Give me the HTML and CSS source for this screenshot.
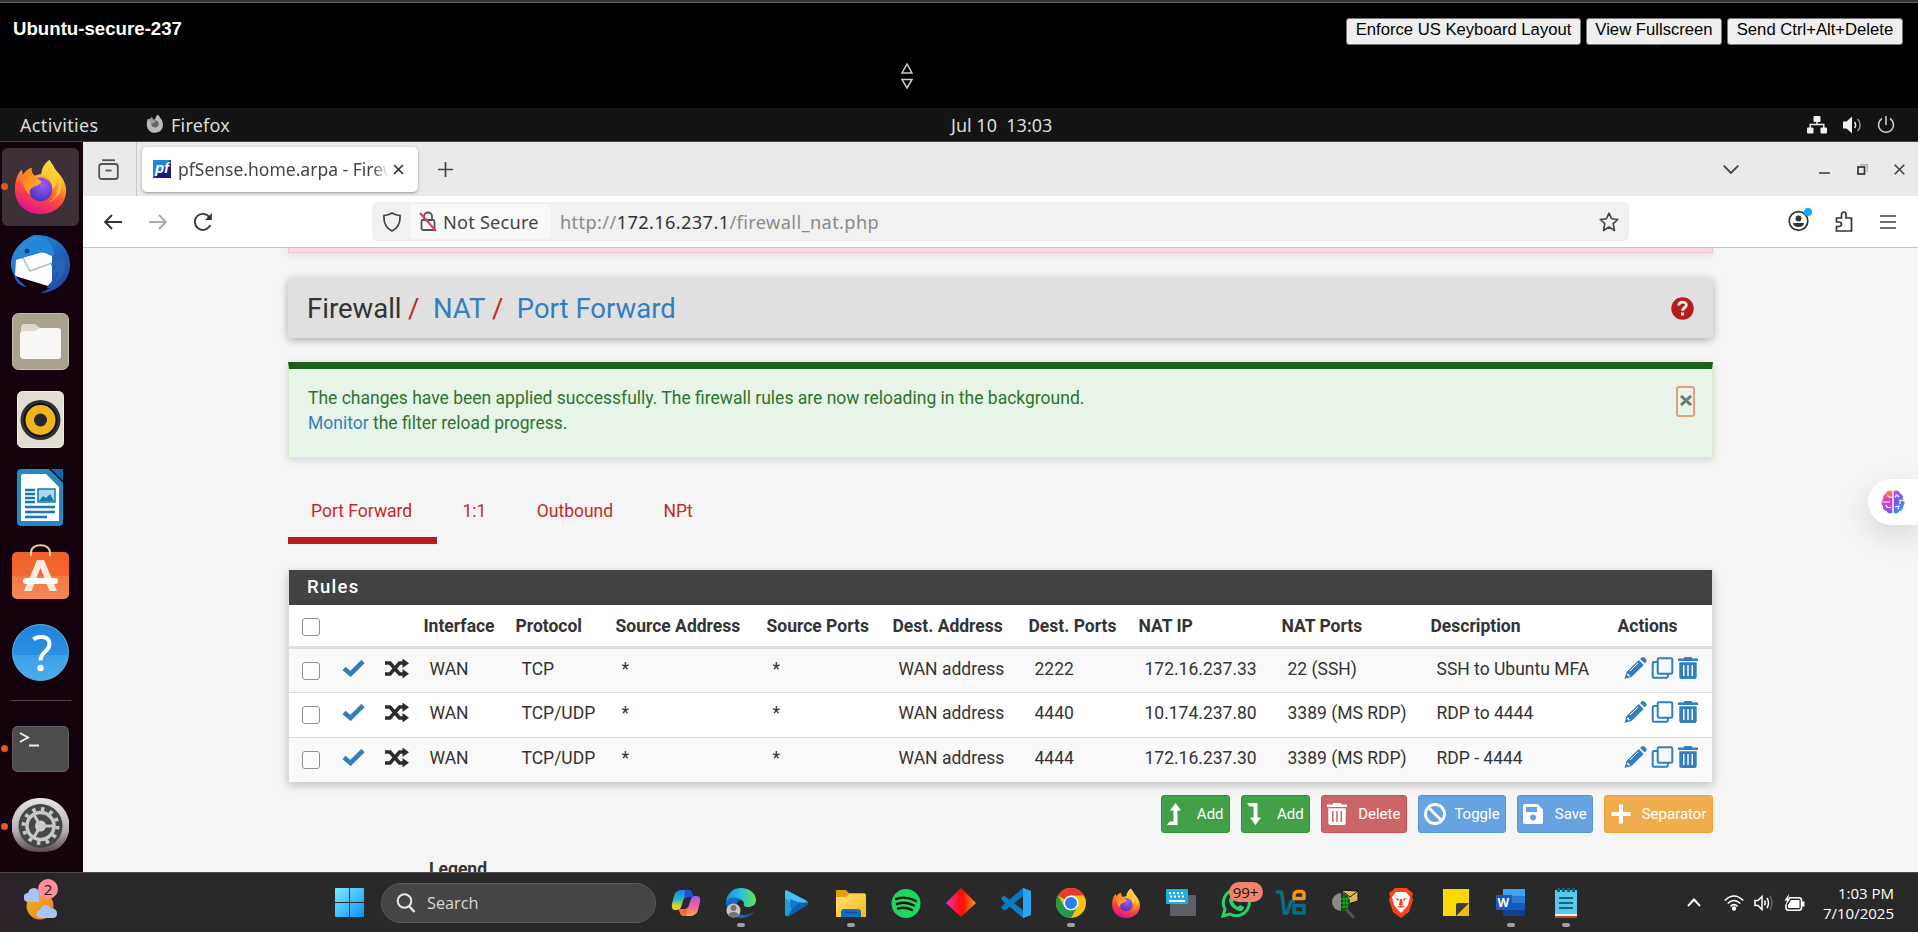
FILE: index.html
```html
<!DOCTYPE html>
<html lang="en">
<head>
<meta charset="utf-8">
<title>Ubuntu-secure-237</title>
<link rel="stylesheet" href="styles.css">
</head>
<body>
<svg class="defs" width="0" height="0" aria-hidden="true">
  <defs>
    <linearGradient id="ff-body" x1="0.8" y1="0" x2="0.4" y2="1"><stop offset="0" stop-color="#fff44f"/><stop offset=".35" stop-color="#ffb02a"/><stop offset=".65" stop-color="#ff4a3a"/><stop offset="1" stop-color="#e0148c"/></linearGradient>
    <radialGradient id="ff-globe" cx=".6" cy=".3" r=".7"><stop offset="0" stop-color="#a05bff"/><stop offset="1" stop-color="#4a35c0"/></radialGradient>
    <linearGradient id="ff-head" x1="0" y1="0" x2="1" y2="1"><stop offset="0" stop-color="#ff7a1a"/><stop offset="1" stop-color="#ffb52e"/></linearGradient>
    <linearGradient id="tb-bird" x1="0" y1="0" x2="1" y2="1"><stop offset="0" stop-color="#2b9ae8"/><stop offset=".5" stop-color="#1f6ac0"/><stop offset="1" stop-color="#2c3f9e"/></linearGradient>
    <linearGradient id="help-bg" x1="0" y1="0" x2="0" y2="1"><stop offset="0" stop-color="#2283db"/><stop offset=".54" stop-color="#2a91e2"/><stop offset=".55" stop-color="#3da0e6"/><stop offset="1" stop-color="#4aaeec"/></linearGradient>
    <linearGradient id="bag-bg" x1="0" y1="0" x2="0" y2="1"><stop offset="0" stop-color="#f4602a"/><stop offset=".5" stop-color="#f2682f"/><stop offset=".51" stop-color="#f27a45"/><stop offset="1" stop-color="#f4875a"/></linearGradient>
    <linearGradient id="gear-ring" x1="0" y1="0" x2="0" y2="1"><stop offset="0" stop-color="#e6e6e6"/><stop offset=".6" stop-color="#b5b0b3"/><stop offset="1" stop-color="#5a4a55"/></linearGradient>
    <linearGradient id="win-logo" x1="0" y1="0" x2="1" y2="1"><stop offset="0" stop-color="#7deaff"/><stop offset="1" stop-color="#0a95f5"/></linearGradient>
    <linearGradient id="brain-l" x1="0" y1="0" x2="0" y2="1"><stop offset="0" stop-color="#ff8c3a"/><stop offset=".4" stop-color="#e93bc0"/><stop offset="1" stop-color="#7a5cf5"/></linearGradient>
    <linearGradient id="brain-r" x1="0" y1="0" x2=".6" y2="1"><stop offset="0" stop-color="#d14bd8"/><stop offset=".5" stop-color="#6a5cf5"/><stop offset="1" stop-color="#2aa8f5"/></linearGradient>
    <linearGradient id="cp-l" x1="0" y1="0" x2="0" y2="1"><stop offset="0" stop-color="#1b84e8"/><stop offset=".45" stop-color="#28b4c8"/><stop offset=".8" stop-color="#d8d820"/><stop offset="1" stop-color="#f5c018"/></linearGradient>
    <linearGradient id="cp-r" x1="0" y1="0" x2="0" y2="1"><stop offset="0" stop-color="#a05cf0"/><stop offset=".5" stop-color="#f0609a"/><stop offset="1" stop-color="#ffa850"/></linearGradient>
    <linearGradient id="edge-g" x1="0" y1="0" x2="1" y2="0"><stop offset="0" stop-color="#1c8fe0"/><stop offset=".5" stop-color="#2ac0d8"/><stop offset="1" stop-color="#6be04a"/></linearGradient>
    <linearGradient id="folder-g" x1="0" y1="0" x2="1" y2="1"><stop offset="0" stop-color="#ffe07a"/><stop offset="1" stop-color="#fdb913"/></linearGradient>
    <linearGradient id="dia-g" x1="0" y1="0" x2="1" y2="0"><stop offset="0" stop-color="#f02fd0"/><stop offset=".45" stop-color="#ff1010"/><stop offset=".6" stop-color="#f81808"/><stop offset="1" stop-color="#ffa000"/></linearGradient>
    <linearGradient id="sun-g" x1="0" y1="0" x2="1" y2="1"><stop offset="0" stop-color="#f5b02a"/><stop offset="1" stop-color="#f08010"/></linearGradient>

    <symbol id="firefox" viewBox="0 0 54 56">
      <path d="M36 1C40 6 42 11 44 13C49 18 54 26 53 34C52 47 41 56 27 56C12 56 1 46 1 31C1 23 3 17 6 13L8 11L9 16C12 12 15 10 18 9C17 12 19 16 21 17L28 15C28 9 32 4 36 1Z" fill="url(#ff-body)"/>
      <circle cx="27" cy="31" r="12" fill="url(#ff-globe)"/>
      <path d="M18 9C17 13 20 17 22 18L28 23C27 27 22 27 19 29C16 31 15 33 17 37C11 33 8 26 9 17C12 12 15 10 18 9Z" fill="url(#ff-head)"/>
      <path d="M28 15C35 17 40 24 39 31C44 27 45 20 43 13C47 22 47 38 35 44C46 41 50 30 48 22L44 13C41 10 39 6 36 1C31 5 29 10 28 15Z" fill="#ffd23a" opacity=".75"/>
    </symbol>
    <symbol id="pencil" viewBox="0 0 22 22"><path d="M14.300 3 19.200 7.900 7 20 0 22 2 15Z M15.600 1.900 17 .600C18 -.2 19.200-.2 20 .600L21.500 2.200C22.300 3 22.300 4.200 21.500 5L20.300 6.500Z"/><path class="cut" d="M5.500 14 13.500 6" stroke-width="1"/><path class="cut" d="M2.700 17 5 19.300" stroke-width="1.500"/></symbol>
    <symbol id="clone" viewBox="0 0 22 22"><path d="M7.500 1.200H19.500A1.300 1.300 0 0 1 20.800 2.500V15.500A1.300 1.300 0 0 1 19.500 16.800H7.500A1.300 1.300 0 0 1 6.200 15.500V2.500A1.300 1.300 0 0 1 7.500 1.200ZM6 5H2.500A1.300 1.300 0 0 0 1.200 6.300V19.500A1.300 1.300 0 0 0 2.500 20.800H15A1.300 1.300 0 0 0 16.300 19.500V17" fill="none" stroke="currentColor" stroke-width="2"/></symbol>
    <symbol id="trash" viewBox="0 0 20 22"><path fill-rule="evenodd" d="M0 1.500H5.500L6.500 0H13.500L14.500 1.500H20V4H0ZM1.300 5.200H18.700V20A2 2 0 0 1 16.700 22H3.300A2 2 0 0 1 1.300 20ZM5 8V19H6.500V8ZM9.250 8V19H10.750V8ZM13.500 8V19H15V8Z"/></symbol>
    <symbol id="check" viewBox="0 0 22 17"><path d="M1.500 8.500 8 14 20.500 1.500" fill="none" stroke="currentColor" stroke-width="4.600"/></symbol>
    <symbol id="shuffle" viewBox="0 0 24 19"><path d="M0 4H5L14.500 15H18M0 15H5L14.500 4H18" fill="none" stroke="currentColor" stroke-width="3.600"/><path d="M17.500 -.5 24 4.200 17.500 9ZM17.500 10 24 14.800 17.500 19.500Z"/></symbol>
  </defs>
</svg>

<header class="host-bar">
  <h1 class="host-title">Ubuntu-secure-237</h1>
  <div class="host-actions">
    <button class="host-btn b1">Enforce US Keyboard Layout</button>
    <button class="host-btn b2">View Fullscreen</button>
    <button class="host-btn b3">Send Ctrl+Alt+Delete</button>
  </div>
  <svg class="drag-cursor" width="14" height="28" viewBox="0 0 14 28" fill="#000" stroke="#ccc" stroke-width="1.500"><path d="M7 2 12 11H2ZM7 26 12 17.500H2Z"/></svg>
</header>

<div class="gnome-bar">
  <span class="activities">Activities</span>
  <span class="app-menu">
    <svg width="18" height="19" viewBox="0 0 54 56"><path d="M36 1C40 6 42 11 44 13C54 22 56 56 27 56C5 56-3 33 6 13L9 16 18 9 21 17 28 15C28 9 32 4 36 1Z" fill="#bbb"/><circle cx="27" cy="29" r="11" fill="#666"/><path d="M9 17 18 9 22 18 30 23 19 29Z" fill="#999"/></svg>
    Firefox
  </span>
  <span class="clock">Jul 10&nbsp; 13:03</span>
  <span class="status">
    <svg width="20" height="18" viewBox="0 0 20 18" fill="#f0f0f0"><rect x="6.500" y="0" width="7" height="6" rx="1"/><rect x="0" y="11.500" width="6.500" height="6" rx="1"/><rect x="13.500" y="11.500" width="6.500" height="6" rx="1"/><path d="M10 5V8.500M3.200 12V8.500H16.800V12" fill="none" stroke="#f0f0f0" stroke-width="1.400"/></svg>
    <svg width="19" height="18" viewBox="0 0 19 18"><path d="M0 5.500H3.500L9 .500V17.500L3.500 12.500H0Z" fill="#f0f0f0"/><path d="M11.500 6C13 7.500 13 10.500 11.500 12" fill="none" stroke="#eee" stroke-width="1.500"/><path d="M14.500 3C18 6 18 12 14.500 15" fill="none" stroke="#999" stroke-width="1.500"/></svg>
    <svg width="18" height="18" viewBox="0 0 18 18" fill="none" stroke="#ccc" stroke-width="1.600"><path d="M5 2.500A7.500 7.500 0 1 0 13 2.500M9 0V9"/></svg>
  </span>
</div>

<div class="desktop">
  <nav class="dock">
    <div class="dock-item active running"><svg width="53" height="55"><use href="#firefox"/></svg></div>
    <div class="dock-item"><svg width="61" height="60" viewBox="0 0 61 60"><path d="M24 1C45 0 60 13 60 31C60 46 48 58 31 59L40 54C20 56 3 48 1 32C0 20 9 7 24 1Z" fill="url(#tb-bird)"/><path d="M6 26 12 24 33 18 42 22 42 47 36 54 5 42Z" fill="#fdfdff"/><path d="M13 24 20 37 42 29" fill="none" stroke="#bbb" stroke-width="1.500"/><path d="M5 42 38 52 36 57C24 58 10 52 5 42Z" fill="#15020f"/><path d="M4 40C5 48 10 52 17 53C11 49 8 45 6 42Z" fill="#2a5ec0"/><path d="M8 22C8 12 16 4 26 3C38 4 44 10 44 22C38 17 26 18 16 21L12 25Z" fill="#2488da"/><circle cx="17" cy="17" r="2.500" fill="#123d70"/><path d="M44 22 41 32 46 30 42 40 49 37 45 49 53 41 56 27" fill="#2463b8"/></svg></div>
    <div class="dock-item"><svg width="57" height="57" viewBox="0 0 57 57"><rect x=".5" y=".5" width="56" height="56" rx="6" fill="#a8a28e" stroke="#c8c2b0"/><path d="M9 15Q9 11 13 11H23L28 15H44V30H9Z" fill="#dcd8cc"/><path d="M12 18H23L28 15H46Q49 15 49 18V43Q49 46 46 46H12Q8 46 8 42V21Q8 18 12 18Z" fill="#f8f7f4"/></svg></div>
    <div class="dock-item"><svg width="47" height="57" viewBox="0 0 47 57"><rect x=".5" y=".5" width="46" height="56" rx="5" fill="#e3ded2" stroke="#f2eee6"/><circle cx="23.500" cy="29" r="20" fill="#2f3036"/><circle cx="23.500" cy="29" r="17" fill="#111318"/><circle cx="23.500" cy="29" r="15" fill="#eeb51c"/><circle cx="23.500" cy="29" r="6.500" fill="#25262b"/></svg></div>
    <div class="dock-item"><svg width="47" height="57" viewBox="0 0 47 57"><path d="M4 0H32L46 14V53Q46 57 42 57H4Q0 57 0 53V4Q0 0 4 0Z" fill="#2489c2"/><path d="M34 0H46V12Z" fill="#0c6ba5"/><path d="M6 5H29L42 18V52H4V7Q4 5 6 5Z" fill="#fff"/><path d="M8 21H18M8 25H18M8 29H18M8 33H18M8 38H38M8 43H38M8 48H30" stroke="#1479b4" stroke-width="2.300"/><rect x="21" y="20" width="17" height="13" fill="#a9d8f0" stroke="#1479b4" stroke-width="1.500"/><path d="M22 32 26 27 29 29 33 25 37 32Z" fill="#1479b4"/></svg></div>
    <div class="dock-item"><svg class="bag" width="57" height="55" viewBox="0 0 57 55"><path d="M19 12V8Q20 1.200 28.500 1.200T38 8V12" fill="none" stroke="#e8cf9a" stroke-width="2"/><rect y="8" width="57" height="47" rx="5" fill="url(#bag-bg)"/><path d="M19 12V8M38 12V8" stroke="#f0dcb0" stroke-width="2"/><path fill-rule="evenodd" d="M25 16H32L45 47H37.500L28.500 24 19.500 47H12Z" fill="#fbe9df"/><rect x="11" y="34" width="35" height="6" rx="3" fill="#fff"/></svg></div>
    <div class="dock-item"><svg width="57" height="57" viewBox="0 0 57 57"><circle cx="28.500" cy="28.500" r="28" fill="url(#help-bg)" stroke="#5ab4ee"/><path d="M21.500 15.500C25 12 37.500 11 37.500 20C37.500 28 28.500 27 28.500 36.500" fill="none" stroke="#fff" stroke-width="4"/><circle cx="28.500" cy="44" r="3.200" fill="#fff"/></svg></div>
    <hr class="dock-sep">
    <div class="dock-item running"><svg width="57" height="46" viewBox="0 0 57 46"><rect x=".5" y=".5" width="56" height="45" rx="5" fill="#4c4c4c" stroke="#626262"/><path d="M8 7 16 11.500 8 16" fill="none" stroke="#eee" stroke-width="2"/><path d="M17 19.500H27" stroke="#eee" stroke-width="2"/></svg></div>
    <div class="dock-item running"><svg class="gear" width="57" height="54" viewBox="0 0 57 54"><path d="M28.500 0A28 28 0 0 1 48 49Q42 54 28.500 54T9 49A28 28 0 0 1 28.500 0Z" fill="url(#gear-ring)"/><circle cx="28.500" cy="28" r="22" fill="#474747"/><circle cx="28.500" cy="28" r="17" fill="none" stroke="#c8c8c8" stroke-width="4" stroke-dasharray="3.500 5.400"/><circle cx="28.500" cy="28" r="13.500" fill="none" stroke="#c8c8c8" stroke-width="3.500"/><circle cx="28.500" cy="28" r="5.500" fill="#d0d0d0"/><path d="M28.500 28H42M28.500 28 21.500 16M28.500 28 21.500 40" stroke="#c8c8c8" stroke-width="3"/></svg></div>
  </nav>

  <main class="browser">
    <div class="tab-strip">
      <span class="recent"><svg width="21" height="21" viewBox="0 0 21 21" fill="none" stroke="#555" stroke-width="1.800"><path d="M4 1.200H17"/><rect x="1.200" y="5" width="18.600" height="15" rx="2.500"/><path d="M7.500 11.500H13.500"/></svg></span>
      <div class="tab">
        <span class="favicon">pf</span>
        <span class="tab-title">pfSense.home.arpa - Firewall</span>
        <svg width="11" height="11" viewBox="0 0 11 11" stroke="#333" stroke-width="1.700"><path d="M1 1 10 10M10 1 1 10"/></svg>
      </div>
      <svg class="new-tab" width="15" height="15" viewBox="0 0 15 15" stroke="#444" stroke-width="1.700"><path d="M7.500 0V15M0 7.500H15"/></svg>
      <div class="win-ctl">
        <svg class="all-tabs" width="16" height="9" viewBox="0 0 16 9" fill="none" stroke="#444" stroke-width="1.800"><path d="M.7.700 8 8 15.300.700"/></svg>
        <svg width="11" height="11" viewBox="0 0 11 11" stroke="#444" stroke-width="1.600"><path d="M0 9H11"/></svg>
        <svg width="11" height="11" viewBox="0 0 11 11" fill="none" stroke="#333" stroke-width="1.700"><path d="M3 .700H10.300V8" stroke="#aaa" stroke-width="1.400"/><rect x="1" y="3" width="6.500" height="7" /></svg>
        <svg width="11" height="11" viewBox="0 0 11 11" stroke="#444" stroke-width="1.600"><path d="M.7.700 10.300 10.300M10.300.700.700 10.300"/></svg>
      </div>
    </div>

    <div class="toolbar">
      <svg class="nav-back" width="18" height="16" viewBox="0 0 18 16" fill="none" stroke="#333" stroke-width="1.900"><path d="M8 1 1.200 8 8 15M1.200 8H18"/></svg>
      <svg class="nav-fwd" width="18" height="16" viewBox="0 0 18 16" fill="none" stroke="#aaa" stroke-width="1.900"><path d="M10 1 16.800 8 10 15M16.800 8H0"/></svg>
      <svg class="nav-reload" width="19" height="18" viewBox="0 0 19 18" fill="none" stroke="#333" stroke-width="1.800"><path d="M16.200 12A8 8 0 1 1 15.500 4.500"/><path d="M17.800 0V7H11Z" fill="#333" stroke="none"/></svg>
      <div class="urlbar">
        <svg class="shield" width="18" height="20" viewBox="0 0 18 20" fill="none" stroke="#444" stroke-width="1.700"><path d="M9 1C11.500 2.500 14 3.300 17 3.500C17.500 11 14.500 16.500 9 19C3.500 16.500.500 11 1 3.500C4 3.300 6.500 2.500 9 1Z"/></svg>
        <div class="identity">
          <svg width="18" height="21" viewBox="0 0 18 21" fill="none" stroke="#555" stroke-width="1.800"><path d="M5 9V5.500A4 4 0 0 1 13 5.500V9"/><rect x="2.500" y="9" width="13" height="10" rx="1.500"/><path d="M1 2 17 20" stroke="#e23a5c" stroke-width="2"/></svg>
          <span>Not Secure</span>
        </div>
        <span class="url">http://<b>172.16.237.1</b>/firewall_nat.php</span>
        <svg class="star" width="20" height="20" viewBox="0 0 20 20" fill="none" stroke="#444" stroke-width="1.600" stroke-linejoin="round"><path d="M10 1.200 12.600 6.800 18.800 7.500 14.200 11.700 15.500 18.500 10 15 4.500 18.500 5.800 11.700 1.200 7.500 7.400 6.800Z"/></svg>
      </div>
      <div class="tool-right">
        <svg width="24" height="24" viewBox="0 0 24 24"><circle cx="10.500" cy="13" r="9.300" fill="none" stroke="#333" stroke-width="1.700"/><circle cx="10.500" cy="10.500" r="3" fill="#333"/><path d="M5 15H16Q15.500 19 10.500 19T5 15Z" fill="#333"/><circle cx="20" cy="4" r="4" fill="#08aef8"/></svg>
        <svg class="ext" width="18" height="21" viewBox="0 0 18 21" fill="none" stroke="#333" stroke-width="1.700"><path d="M1.500 7H6.500V4Q6.500 1 8.800 1T11 4V7H16.500V20H1.500V15.500H4Q6.500 15.500 6.500 13.300T4 11H1.500Z"/></svg>
        <svg width="16" height="14" viewBox="0 0 16 14" stroke="#444" stroke-width="1.600"><path d="M0 1H16M0 7H16M0 13H16"/></svg>
      </div>
    </div>

    <section class="page">
      <div class="alert-cut"></div>
      <div class="crumbs">
        <div class="crumb-path">Firewall<i>/</i><a>NAT</a><i>/</i><a>Port Forward</a></div>
        <svg width="23" height="23" viewBox="0 0 23 23"><circle cx="11.500" cy="11.500" r="11.200" fill="#b71c1c"/><path d="M7.700 8.500C8 4 15.500 4 15.300 8.300C15.200 11 11.500 10.500 11.500 13.800" fill="none" stroke="#eee" stroke-width="2.800"/><rect x="10" y="15.500" width="3" height="3" fill="#eee"/></svg>
      </div>
      <div class="alert">
        <div class="alert-text">The changes have been applied successfully. The firewall rules are now reloading in the background.<br><a>Monitor</a> the filter reload progress.</div>
        <span class="close"><svg width="12" height="11" viewBox="0 0 12 11" stroke="#6f7d70" stroke-width="3"><path d="M1 1 11 10M11 1 1 10"/></svg></span>
      </div>
      <ul class="nav-tabs"><li class="sel">Port Forward</li><li>1:1</li><li>Outbound</li><li>NPt</li></ul>
      <div class="panel">
        <h2>Rules</h2>
        <table>
          <colgroup><col class="c-chk"><col class="c-on"><col class="c-shf"><col class="c-if"><col class="c-pr"><col class="c-sa"><col class="c-sp"><col class="c-da"><col class="c-dp"><col class="c-ip"><col class="c-np"><col class="c-de"><col class="c-ac"></colgroup>
          <thead><tr><th class="chk"><span class="box"></span></th><th></th><th></th><th>Interface</th><th>Protocol</th><th>Source Address</th><th>Source Ports</th><th>Dest. Address</th><th>Dest. Ports</th><th>NAT IP</th><th>NAT Ports</th><th>Description</th><th>Actions</th></tr></thead>
          <tbody>
            <tr><td class="chk"><span class="box"></span></td><td class="on"><svg width="23" height="17"><use href="#check"/></svg></td><td class="shf"><svg width="24" height="19"><use href="#shuffle"/></svg></td><td>WAN</td><td>TCP</td><td>*</td><td>*</td><td>WAN address</td><td>2222</td><td>172.16.237.33</td><td>22 (SSH)</td><td>SSH to Ubuntu MFA</td><td class="act"><svg width="23" height="22"><use href="#pencil"/></svg><svg width="23" height="22"><use href="#clone"/></svg><svg width="20" height="22"><use href="#trash"/></svg></td></tr>
            <tr><td class="chk"><span class="box"></span></td><td class="on"><svg width="23" height="17"><use href="#check"/></svg></td><td class="shf"><svg width="24" height="19"><use href="#shuffle"/></svg></td><td>WAN</td><td>TCP/UDP</td><td>*</td><td>*</td><td>WAN address</td><td>4440</td><td>10.174.237.80</td><td>3389 (MS RDP)</td><td>RDP to 4444</td><td class="act"><svg width="23" height="22"><use href="#pencil"/></svg><svg width="23" height="22"><use href="#clone"/></svg><svg width="20" height="22"><use href="#trash"/></svg></td></tr>
            <tr><td class="chk"><span class="box"></span></td><td class="on"><svg width="23" height="17"><use href="#check"/></svg></td><td class="shf"><svg width="24" height="19"><use href="#shuffle"/></svg></td><td>WAN</td><td>TCP/UDP</td><td>*</td><td>*</td><td>WAN address</td><td>4444</td><td>172.16.237.30</td><td>3389 (MS RDP)</td><td>RDP - 4444</td><td class="act"><svg width="23" height="22"><use href="#pencil"/></svg><svg width="23" height="22"><use href="#clone"/></svg><svg width="20" height="22"><use href="#trash"/></svg></td></tr>
          </tbody>
        </table>
      </div>
      <div class="btns">
        <button class="btn green w-add"><svg width="14" height="22" viewBox="0 0 14 22"><path d="M8.500 0 14 7.500H10.500V22H0L2.500 18.500H6.500V7.500H3Z"/></svg><span>Add</span></button>
        <button class="btn green w-add"><svg width="14" height="22" viewBox="0 0 14 22"><path d="M8.500 22 14 14.500H10.500V0H0L2.500 3.500H6.500V14.500H3Z"/></svg><span>Add</span></button>
        <button class="btn red w-del"><svg width="20" height="22"><use href="#trash"/></svg><span>Delete</span></button>
        <button class="btn blue w-tog"><svg width="22" height="22" viewBox="0 0 22 22" fill="none" stroke="#fff" stroke-width="2.800"><circle cx="11" cy="11" r="9.500"/><path d="M4.500 4.500 17.500 17.500"/></svg><span>Toggle</span></button>
        <button class="btn blue w-sav"><svg width="20" height="20" viewBox="0 0 20 20"><path fill-rule="evenodd" d="M2 0H14.500L20 5.500V18A2 2 0 0 1 18 20H2A2 2 0 0 1 0 18V2A2 2 0 0 1 2 0ZM3 3V8H14V3ZM10 10.500A3 3 0 1 0 10 16.500A3 3 0 1 0 10 10.500Z"/></svg><span>Save</span></button>
        <button class="btn orange w-sep"><svg width="20" height="20" viewBox="0 0 20 20" stroke="#fff" stroke-width="4"><path d="M10 .500V19.500M.500 10H19.500"/></svg><span>Separator</span></button>
      </div>
      <div class="legend">Legend</div>
    </section>
  </main>

  <div class="brain-btn"><svg width="24" height="24" viewBox="0 0 24 24"><path d="M11.300 1C8-.5 5.500 1 5 3.500C2.500 4.500 1.500 7 2.300 9C0 11-.2 14 2 16C1.500 19 3.500 21 5.500 21C7 24 10 24 11.300 22.500Z" fill="url(#brain-l)"/><path d="M12.700 1C16-.5 18.500 1 19 3.500C21.500 4.500 22.500 7 21.700 9C24 11 24.200 14 22 16C22.500 19 20.500 21 18.500 21C17 24 14 24 12.700 22.500Z" fill="url(#brain-r)"/><path d="M11 7Q8 8 6.500 5.500M1 12H9M10 17Q6 19 5 15M14 7 16 5 18 7M23 11 19 10 19 14M14 17 18 16 17 19" fill="none" stroke="#fff" stroke-width="1.200"/></svg></div>
</div>

<footer class="taskbar">
  <div class="weather"><svg width="34" height="36" viewBox="0 0 34 36"><circle cx="16" cy="21" r="13.500" fill="url(#sun-g)"/><path d="M4 17A4.500 4.500 0 0 1 4 8A6 6 0 0 1 15 6V17Z" fill="#a9c4f7"/><path d="M17 33A4 4 0 0 1 16 25A6 6 0 0 1 27 23Q34 24 33 30Q32 33 29 33Z" fill="#a9c4f7"/></svg><span class="badge pink">2</span></div>
  <svg class="start" width="29" height="29" viewBox="0 0 29 29" fill="url(#win-logo)"><path d="M0 1Q0 0 1 0H14V14H0ZM15 0H28Q29 0 29 1V14H15ZM0 15H14V29H1Q0 29 0 28ZM15 15H29V28Q29 29 28 29H15Z"/></svg>
  <div class="search"><svg width="20" height="20" viewBox="0 0 20 20" fill="none" stroke="#e8e8e8" stroke-width="2"><circle cx="8.500" cy="8" r="6.800"/><path d="M13 13 18.500 19" stroke-width="2.400"/></svg><span>Search</span></div>
  <div class="apps">
    <div class="app"><svg viewBox="0 0 30 30"><path d="M7 3Q8 2 10 2H18Q20 2 21 5L22 9H16Q13 9 12 13L10 19Q9 22 6 22H4Q0 22 1 16L3 8Q4 4 7 3Z" fill="url(#cp-l)"/><path d="M23 27Q22 28 20 28H12Q10 28 9 25L8 21H14Q17 21 18 17L20 11Q21 8 24 8H26Q30 8 29 14L27 22Q26 26 23 27Z" fill="url(#cp-r)"/><path d="M14 2H18Q20 2 21 5L22 9H16Q14 9 13 11Z" fill="#2050d8"/><path d="M9 25 8 21H14Q16 21 17 19L15 28H12Q10 28 9 25Z" fill="#f8683a"/></svg></div>
    <div class="app open"><svg viewBox="0 0 30 30"><path d="M0 15C0 6 7 0 15 0C24 0 30 6 30 12C30 17 26 19 22 19C18 19 17 17 18 15C17 11 10 10 5 12Z" fill="url(#edge-g)"/><path d="M0 15C1 9 10 8 15 12C9 13 8 22 14 26C18 28 24 27 28 23C25 28 20 30 15 30C6 30 0 23 0 15Z" fill="#1768c0"/><circle cx="7.500" cy="22.500" r="7" fill="#c9c6c3"/><circle cx="7.500" cy="20" r="3" fill="#77736f"/><path d="M2.500 27Q3 24 7.500 24T12.500 27Q10 29.500 7.500 29.500T2.500 27Z" fill="#77736f"/></svg></div>
    <div class="app"><svg viewBox="0 0 30 30"><path d="M4 4Q4 1 7 3L26 13Q28 15 26 17L8 28Q4 29 4 26Z" fill="#1b9bd8"/><path d="M4 4Q4 1 7 3L26 13 16 20 4 10Z" fill="#45c2ee"/><path d="M7 28 15 14 27 15Q27 16 26 17L8 28Z" fill="#0a60b0"/><path d="M9 11 19 15 10 21Z" fill="#1876c8"/></svg></div>
    <div class="app open"><svg viewBox="0 0 30 30"><path d="M0 3Q0 2 1 2H10L13 5H29V12H0Z" fill="#e0a010"/><path d="M0 9H10L13 6H29Q30 6 30 7V29H0Z" fill="url(#folder-g)"/><path d="M5 29V24Q5 21 8 21H22Q25 21 25 24V29Z" fill="#1171c4"/><path d="M9 24.500H21" stroke="#0a4f92" stroke-width="1.500"/></svg></div>
    <div class="app"><svg viewBox="0 0 30 30"><circle cx="15" cy="15.500" r="14.500" fill="#1ed760"/><path d="M5 11Q15 7.500 25 13M6 16Q15 13 23 17.500M7 20.500Q14 18.500 21 22" fill="none" stroke="#191414" stroke-width="2.400" stroke-linecap="round"/></svg></div>
    <div class="app"><svg viewBox="0 0 30 30"><path d="M15 0 30 15 15 29 0 15Z" fill="url(#dia-g)"/></svg></div>
    <div class="app"><svg viewBox="0 0 30 30"><path d="M22 0 30 3V27L22 30 1 12Q-.5 10.500 1 9L3 7.500 22 22Z" fill="#0f7cc8"/><path d="M22 0V8L4 22.500 1 21Q-.5 19.500 1 18Z" fill="#0878c4"/><path d="M22 0 30 3V27L22 30Z" fill="#2aa5f0"/></svg></div>
    <div class="app open"><svg viewBox="0 0 30 30"><circle cx="15" cy="15" r="15" fill="#fbc116"/><path d="M15 15 2 7.500A15 15 0 0 1 28 7.500H15Z" fill="#e33b2e"/><path d="M2 7.500A15 15 0 0 0 15 30L21.500 18.700 15 15 8.500 18.700Z" fill="#249a46"/><circle cx="15" cy="15" r="7.500" fill="#fff"/><circle cx="15" cy="15" r="6" fill="#2a7af0"/></svg></div>
    <div class="app"><svg><use href="#firefox"/></svg></div>
    <div class="app"><svg viewBox="0 0 30 30"><rect x="4" y="7" width="26" height="21" rx="1" fill="#5b6167"/><rect x="0" y="1" width="22" height="15" rx="1" fill="#20b0e0"/><path d="M3 5H19M4 8.500H19" stroke="#fff" stroke-width="2" stroke-dasharray="2 2"/><path d="M3 13H19" stroke="#fff" stroke-width="2"/></svg></div>
    <div class="app"><svg viewBox="0 0 30 30"><path d="M2 28 4 21A13 13 0 1 1 9 26Z" fill="none" stroke="#25d366" stroke-width="3"/><path d="M9 9Q11 7 12 10L13 12 12 14Q14 18 17 19L19 17 23 19Q23 22 20 23C14 23 8 17 8 12Z" fill="#25d366"/></svg><span class="badge salmon">99+</span></div>
    <div class="app"><svg viewBox="0 0 30 30" fill="none" stroke-linejoin="round"><path d="M0 4H5.500L8.500 25H11L15 13.500H19" stroke="#0f6b82" stroke-width="3.600"/><path d="M18 17.500H28V25H18Z" stroke="#0f6b82" stroke-width="3.600"/><path d="M18 10.500V8Q18 3.500 22 3.500H25Q28 3.500 28 6.500V10.500Z" stroke="#f2941c" stroke-width="3.600"/></svg></div>
    <div class="app"><svg viewBox="0 0 30 30"><path d="M10 2 27 3V13L17 16Z" fill="#dfb755" stroke="#111"/><path d="M10 2 19 9 27 3" fill="none" stroke="#111"/><circle cx="10" cy="14" r="9" fill="#888"/><path d="M10 5A9 9 0 0 1 10 23Z" fill="#084a08"/><path d="M13 7V21M16 9V19M10 11H18M10 15H18M10 19H17" stroke="#12c020"/><path d="M15 21 23 30" stroke="#555" stroke-width="3"/></svg></div>
    <div class="app"><svg viewBox="0 0 30 30"><path d="M9 0H21L24 3 27 5 26 9 27 12 23 24 15 30 7 24 3 12 4 9 3 5 6 3Z" fill="#fb4218"/><path d="M10 4H20L24 9 22 17 18 22 15 25 12 22 8 17 6 9Z" fill="#fff"/><path d="M9 10 13 11 12 13ZM21 10 17 11 18 13ZM14 11H16L17 17 15 18 13 17ZM11 18 15 20 19 18" fill="#fb4218"/></svg></div>
    <div class="app"><svg viewBox="0 0 30 30"><path d="M2 1H28V15L15 28H2Z" fill="#fdd808"/><path d="M15 28V15H28V28Z" fill="#f2b90c"/><path d="M15 28V17Q15 15 17 15H28Z" fill="#3d3d3d"/></svg></div>
    <div class="app open"><svg viewBox="0 0 30 30"><path d="M7 1H29V8H7Z" fill="#41a5ee"/><path d="M7 8H29V15H7Z" fill="#2b7cd3"/><path d="M7 15H29V22H7Z" fill="#185abd"/><path d="M7 22H29V28H7Z" fill="#103f91"/><rect x="0" y="7" width="16" height="15" rx="1" fill="#185abd"/></svg><b class="word-w">W</b></div>
    <div class="app open"><svg viewBox="0 0 30 30"><rect x="4" y="2" width="22" height="25" fill="#5cc8e6"/><path d="M4 26H26V28H4Z" fill="#f0f0f0"/><path d="M4 28H26V30H4Z" fill="#a8501a"/><path d="M6 2H25" stroke="#0e5f80" stroke-width="4" stroke-dasharray="3 2"/><path d="M8 10H22M8 15H22M8 20H22" stroke="#0f6488" stroke-width="2"/></svg></div>
  </div>
  <div class="tray">
    <svg class="t-up" width="14" height="9" viewBox="0 0 14 9" fill="none" stroke="#fff" stroke-width="1.900"><path d="M1 8 7 1.500 13 8"/></svg>
    <svg class="t-wifi" width="20" height="16" viewBox="0 0 20 16" fill="none" stroke="#fff" stroke-width="1.600"><path d="M.7 5.500Q10-3.500 19.300 5.500M3.700 8.500Q10 2.500 16.300 8.500M6.500 11.300Q10 8 13.500 11.300"/><circle cx="10" cy="13.500" r="1.400" fill="#fff"/></svg>
    <svg class="t-vol" width="20" height="16" viewBox="0 0 20 16" fill="none" stroke="#fff" stroke-width="1.500"><path d="M1 5.500H4L8 1.500V14.500L4 10.500H1Z"/><path d="M10.500 5.500Q12 8 10.500 10.500M13 3Q16 8 13 13"/><path d="M16 1Q20 8 16 15" stroke="#666"/></svg>
    <svg class="t-bat" width="21" height="18" viewBox="0 0 21 18"><rect x="2" y="3.800" width="15.500" height="12.400" rx="2.500" fill="none" stroke="#fff" stroke-width="1.600"/><path d="M7 6H15.500V14H4V11Z" fill="#fff"/><path d="M18 7.500H20.500V12.500H18Z" fill="#fff"/><path d="M5-1V9L0 11V0Z" fill="#292929"/><path d="M5 0 .5 6.500H3L1.500 11.500 6.500 4.500H4.200Z" fill="#fff"/></svg>
    <div class="time">1:03 PM<br>7/10/2025</div>
  </div>
</footer>
</body>
</html>
```
FILE: styles.css
```css
* { box-sizing: border-box; }
body { margin: 0; width: 1918px; height: 932px; overflow: hidden; display: flex; flex-direction: column; background: #000; font-family: Roboto, "Liberation Sans", sans-serif; }
svg { display: block; flex: none; }
.defs { position: absolute; }
a { color: #337ebf; }
button { border: 0; margin: 0; }

/* Console host strip */
.host-bar { position: relative; flex: none; height: 108px; border-top: 2px solid #333; box-shadow: inset 0 1px #666; display: flex; justify-content: space-between; padding: 16px 15px 0 13px; font-family: "Liberation Sans", Arial, sans-serif; }
.host-title { margin: 0; font-size: 18.67px; line-height: 21px; color: #fff; }
.host-actions { display: flex; gap: 5px; }
.host-btn { height: 27px; padding: 0 0 4px; background: #efefef; border: 1px solid #767676; border-radius: 3px; font: 16.67px "Liberation Sans", Arial, sans-serif; line-height: 20px; color: #000; white-space: nowrap; }
.b1 { width: 235px; }
.b2 { width: 136px; }
.b3 { width: 176px; }
.drag-cursor { position: absolute; left: 900px; top: 60px; }

/* GNOME top bar */
.gnome-bar { position: relative; flex: none; height: 34px; background: #131313; border-bottom: 1px solid #444; display: flex; align-items: center; padding: 0 23px 0 20px; font: 18px/34px "Noto Sans", sans-serif; color: #dcdcdc; }
.activities { width: 126px; letter-spacing: .35px; }
.app-menu { display: flex; align-items: center; gap: 7px; width: 805px; letter-spacing: .2px; }
.app-menu svg { margin-top: -2px; }
.clock { flex: 1; }
.status { display: flex; align-items: center; gap: 15.500px; }

.desktop { position: relative; height: 730px; flex: none; display: flex; }
.dock { width: 83px; background: #15020f; padding: 6px 4px 0 2px; display: flex; flex-direction: column; }
.dock-item { position: relative; height: 77.6px; flex: none; display: flex; align-items: center; justify-content: center; border-radius: 6px; }
.dock-item.active { background: #3d3039; }
.running::before { content: ""; position: absolute; left: -1px; top: 35px; width: 7px; height: 7px; border-radius: 50%; background: #e95420; }
.bag { margin-top: -6px; }
.gear { margin-top: -3px; }
.dock-sep { width: 61px; height: 1px; margin: 9px auto; border: 0; background: #4d4048; flex: none; }

/* Browser chrome */
.browser { width: 1835px; display: flex; flex-direction: column; overflow: hidden; }
.tab-strip { height: 54px; flex: none; background: #eaeaea; display: flex; align-items: center; }
.recent { width: 54px; height: 54px; border-right: 1px solid #c8c8c8; display: flex; align-items: center; padding-left: 15px; }
.tab { width: 276px; height: 45px; margin-left: 5px; background: #fff; border-radius: 5px; box-shadow: 0 1px 3px rgba(0,0,0,.35); display: flex; align-items: center; padding-left: 11px; }
.favicon { width: 18px; height: 18px; background: linear-gradient(135deg, #1e88d2 45%, #1b1a80 55%); color: #fff; font: italic bold 15px/16px "Liberation Sans", sans-serif; text-align: center; margin-right: 7px; }
.tab-title { width: 210px; margin-right: 5px; overflow: hidden; white-space: nowrap; font: 17.5px/30px "Noto Sans", sans-serif; color: #444; -webkit-mask-image: linear-gradient(90deg, #000 93%, transparent); mask-image: linear-gradient(90deg, #000 93%, transparent); }
.new-tab { margin-left: 20px; }
.win-ctl { margin-left: auto; display: flex; align-items: center; gap: 26.500px; padding-right: 13px; }
.all-tabs { margin-right: 54px; }
.toolbar { height: 52px; flex: none; background: #fff; border-bottom: 1px solid #c4c4c4; display: flex; align-items: center; padding-left: 21px; }
.nav-fwd { margin-left: 27px; }
.nav-reload { margin-left: 27px; }
.urlbar { width: 1257px; height: 39px; margin-left: 159px; background: #f1f1f2; border-radius: 5px; display: flex; align-items: center; }
.shield { margin-left: 11px; }
.identity { width: 141px; height: 35px; margin-left: 9px; background: #f9f9fa; border-radius: 4px; display: flex; align-items: center; gap: 6px; padding-left: 9px; font: 18.2px/30px "Noto Sans", sans-serif; letter-spacing: .2px; color: #444; white-space: nowrap; }
.url { margin-left: 9px; font: 18.2px/30px "Noto Sans", sans-serif; letter-spacing: .38px; color: #8a8a8a; white-space: nowrap; }
.url b { font-weight: 400; color: #333; }
.star { margin-left: auto; margin-right: 10px; }
.tool-right { margin-left: auto; display: flex; align-items: center; padding-right: 22px; }
.tool-right svg:first-child { margin-top: -3px; }
.ext { margin: 0 27px 0 23px; }

/* pfSense page */
.page { height: 624px; background: #f5f5f5; padding: 0 205px; color: #333; font-size: 17.5px; overflow: hidden; }
.alert-cut { height: 5px; background: #f4dcdf; border: 1px solid #f2c4cc; border-top: 0; box-shadow: 0 2px 8px rgba(0,0,0,.12); }
.crumbs { height: 60px; margin-top: 24.500px; background: #e0e0e0; border-radius: 4px; box-shadow: 0 2px 9px rgba(0,0,0,.3); display: flex; align-items: center; justify-content: space-between; padding: 1px 19px 0; font-size: 27.500px; white-space: nowrap; }
.crumb-path i { font-style: normal; color: #c62828; margin: 0 13.500px 0 6.500px; }
.alert { height: 96px; margin-top: 24px; background: #e7f5e8; border: 1px solid #d8eec4; border-top: 7px solid #1b5e20; box-shadow: 0 2px 8px rgba(0,0,0,.14); display: flex; justify-content: space-between; padding: 17px 17px 0 19px; }
.alert-text { margin-top: .5px; color: #2e7230; line-height: 25px; white-space: nowrap; }
.close { width: 19px; height: 31px; border: 2px solid #ec9c7c; border-radius: 3px; display: flex; align-items: center; justify-content: center; }
.close svg { margin-top: -2px; }
.nav-tabs { list-style: none; margin: 27.500px 0 0; padding: 0; display: flex; color: #c62828; }
.nav-tabs li { height: 59px; padding: 12px 24.800px 0 25.500px; line-height: 28px; }
.nav-tabs li.sel { width: 149px; padding: 12px 0 0 23px; border-bottom: 7px solid #b71c1c; }
.panel { width: 1425px; height: 212px; margin-top: 26px; background: #fff; border: 1px solid #ddd; border-top: 0; box-shadow: 0 3px 9px rgba(0,0,0,.22); }
.panel h2 { margin: 0; height: 35px; background: #424242; color: #fff; font-size: 18.500px; font-weight: 500; line-height: 34px; letter-spacing: 1.300px; padding-left: 18px; }
table { width: 1423px; table-layout: fixed; border-collapse: separate; border-spacing: 0; }
th, td { padding: 0 0 0 11.500px; text-align: left; white-space: nowrap; vertical-align: top; }
th { height: 44px; padding: 2px 0 0 5.500px; line-height: 39px; border-bottom: 3px solid #ddd; font-weight: 700; }
td { height: 44.300px; line-height: 41px; border-bottom: 1px solid #ddd; }
tbody tr:nth-child(odd) td { background: #f9f9f9; }
tbody tr:last-child td { border-bottom: 0; }
.c-chk { width: 47px; } .c-on { width: 42px; } .c-shf { width: 40px; } .c-if { width: 92px; } .c-pr { width: 100px; } .c-sa { width: 151px; } .c-sp { width: 126px; } .c-da { width: 136px; } .c-dp { width: 110px; } .c-ip { width: 143px; } .c-np { width: 149px; } .c-de { width: 187px; } .c-ac { width: 100px; }
.chk { padding: 13px 0 0 12.500px; }
.box { display: block; width: 18px; height: 18px; border: 1.500px solid #8f8f9d; border-radius: 3px; background: #fff; }
.on { padding: 11px 0 0 5.500px; color: #337ebf; fill: none; }
.shf { padding: 10px 0 0 7px; color: #2c2c2c; fill: #2c2c2c; }
.act svg { display: inline-block; vertical-align: top; margin: 8px 4px 0 0; color: #337ebf; fill: #337ebf; }
.act { font-size: 0; }
.act svg:last-child { margin-right: 0; }
.cut { stroke: #fff; }
.btns { display: flex; justify-content: flex-end; gap: 10.700px; margin-top: 13px; }
.btn { height: 38px; border-radius: 3px; display: flex; align-items: center; justify-content: space-between; padding: 0 5.500px; color: #fff; fill: #fff; font: 15px Roboto, sans-serif; white-space: nowrap; }
.green { background: #43a047; border: 1px solid #388e3c; }
.red { background: #cc6666; border: 1px solid #c85050; }
.blue { background: #66a3e0; border: 1px solid #5a94d0; }
.orange { background: #f0ad4e; border: 1px solid #eea236; }
.w-add { width: 69.500px; } .w-del { width: 86px; } .w-tog { width: 88.500px; } .w-sav { width: 76.500px; } .w-sep { width: 109px; }
.legend { margin: 24px 0 0 141px; font-weight: 700; line-height: 24px; }

.brain-btn { position: absolute; right: 0; top: 337px; width: 50px; height: 46px; background: #fff; border-radius: 23px 0 0 23px; box-shadow: 0 10px 30px rgba(0,0,0,.13); padding: 11px 0 0 13px; }

/* Windows taskbar */
.taskbar { flex: none; height: 60px; background: linear-gradient(90deg, #2b212a, #292929 110px); border-top: 1px solid #4a4a4a; display: flex; align-items: center; font-family: "Open Sans", "Noto Sans", sans-serif; }
.weather { position: relative; margin-left: 24px; width: 311px; }
.badge { position: absolute; color: #111; text-align: center; }
.pink { left: 14px; top: -6px; width: 20px; height: 20px; border-radius: 50%; background: #ff8f9c; font-size: 15px; line-height: 20px; }
.salmon { left: 8px; top: -6px; width: 34px; height: 20px; border-radius: 10px; background: #f5826b; font-size: 15px; line-height: 20px; }
.search { width: 275px; height: 40px; margin-left: 17px; border-radius: 20px; background: #454545; border: 1px solid #5a5a5a; display: flex; align-items: center; padding-left: 14px; gap: 11px; font-size: 16.3px; color: #d8d8d8; }
.apps { display: flex; margin-left: 2.500px; }
.app { position: relative; width: 55px; height: 30px; }
.app svg { width: 30px; height: 30px; margin: 0 auto; }
.app.open::after { content: ""; position: absolute; left: 23.500px; top: 35px; width: 8px; height: 4px; border-radius: 2px; background: #a0a0a0; }
.app .salmon { left: 20px; }
.word-w { position: absolute; left: 14px; top: 7px; color: #fff; font-size: 12px; line-height: 15px; }
.tray { margin-left: auto; display: flex; align-items: center; padding-right: 24px; color: #fff; }
.t-wifi { margin-left: 23px; }
.t-vol { margin-left: 10px; }
.t-bat { margin-left: 10px; }
.time { margin-left: 18px; text-align: right; font-size: 15px; line-height: 20px; white-space: nowrap; }
```
